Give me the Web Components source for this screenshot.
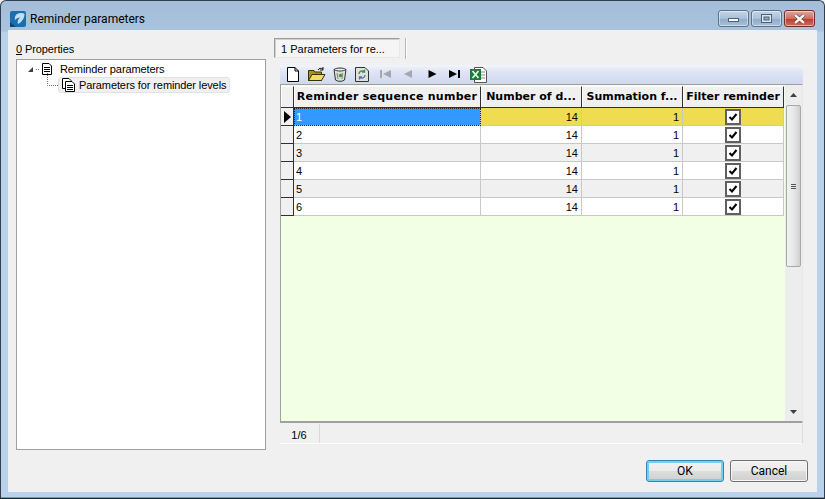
<!DOCTYPE html>
<html>
<head>
<meta charset="utf-8">
<title>Reminder parameters</title>
<style>
	html, body { margin: 0; padding: 0; background: #f0f0f0; overflow: hidden; }
	body { font-family: "Liberation Sans", sans-serif; font-size: 11px; color: #000; }
</style>
</head>
<body>
<dialog-window caption="Reminder parameters">
	<property-tree></property-tree>
	<tab-page>
		<grid-toolbar></grid-toolbar>
		<reminder-grid></reminder-grid>
		<record-status>1/6</record-status>
	</tab-page>
	<dialog-button slot="buttons" default>OK</dialog-button>
	<dialog-button slot="buttons">Cancel</dialog-button>
</dialog-window>

<script>
(()=> {
	class DialogWindow extends HTMLElement {
		constructor() {
			super();
			const shadowRoot = this.attachShadow({ mode: 'open' });
			const caption = this.getAttribute('caption');
			shadowRoot.innerHTML = `
				<style>
					:host {
						display: flex;
						flex-direction: column;
						box-sizing: border-box;
						width: 825px;
						height: 499px;
						border: 1px solid #2f3f4f;
						border-bottom-color: #10242f;
						border-radius: 6px 6px 0 0;
						background: linear-gradient(#a4bed9 0, #a9c3dd 30px, #b9d1ea 31px);
						box-shadow: inset 0 -1px 0 #3fb4d4;
						padding: 0 7px 6px;
					}
					.title {
						display: flex;
						align-items: center;
						box-sizing: border-box;
						height: 29px;
						padding-top: 6px;
						flex: none;
					}
					.logo { width: 16px; height: 16px; margin: 0 4px 0 2px; flex: none; }
					.text {
						flex: 1;
						font: 12px Roboto, "Liberation Sans", sans-serif;
						color: #000;
					}
					.caps { display: flex; margin-right: 2px; }
					.cap {
						display: flex;
						align-items: center;
						justify-content: center;
						box-sizing: border-box;
						width: 31px;
						height: 17px;
						margin-left: 2px;
						border: 1px solid #5d7288;
						border-radius: 3px;
						background: linear-gradient(#c4d6e8, #a9c0d8 50%, #8fabc7 51%, #a5c0da);
						box-shadow: inset 0 0 0 1px rgba(255,255,255,.45);
					}
					.cap.close {
						border-color: #6d2f2a;
						background: linear-gradient(#e0a89e, #cc6e60 50%, #b53c2e 51%, #cf6f5e);
					}
					.client {
						flex: 1;
						display: flex;
						flex-direction: column;
						background: #f0f0f0;
						min-height: 0;
					}
					.main {
						display: flex;
						box-sizing: content-box;
						height: 412px;
						padding: 8px 0 0 8px;
						flex: none;
					}
					.footer {
						display: flex;
						justify-content: flex-end;
						gap: 6px;
						padding: 10px 9px 0 0;
					}
				</style>
				<div class="title">
					<svg class="logo" viewBox="0 0 16 16">
						<rect width="16" height="16" rx="2" fill="#1c6fae"/>
						<path d="M0 11 L6 16 H0 Z" fill="#0c4478"/>
						<path d="M7 3 C10 1.500 13 2 14.500 3 C14.500 7 12 11 8 13 C7 10.500 8 8.500 10 6.500 C8 6.500 6.500 7.500 5 9 C4.500 7 5 4.500 7 3 Z" fill="#bfe0f5"/>
					</svg>
					<div class="text">${caption}</div>
					<div class="caps">
						<div class="cap"><svg width="11" height="7"><rect x="0.500" y="3.500" width="10" height="3" fill="#fff" stroke="#4d6074"/></svg></div>
						<div class="cap"><svg width="11" height="10"><rect x="0.500" y="0.500" width="10" height="8" fill="#dde7f1" stroke="#4d6074"/><rect x="3" y="3" width="5" height="3" fill="#8fabc7" stroke="#4d6074"/></svg></div>
						<div class="cap close"><svg width="13" height="10"><path d="M2 1 L11 9 M11 1 L2 9" stroke="#5b2a25" stroke-width="3.600"/><path d="M2 1 L11 9 M11 1 L2 9" stroke="#f7f2f0" stroke-width="2.400"/></svg></div>
					</div>
				</div>
				<div class="client">
					<div class="main"><slot></slot></div>
					<div class="footer"><slot name="buttons"></slot></div>
				</div>
			`;
		}
	}
	customElements.define('dialog-window', DialogWindow);

	class PropertyTree extends HTMLElement {
		constructor() {
			super();
			const shadowRoot = this.attachShadow({ mode: 'open' });
			shadowRoot.innerHTML = `
				<style>
					:host {
						display: flex;
						flex-direction: column;
						width: 250px;
						flex: none;
						letter-spacing: -.1px;
					}
					.label { height: 21px; line-height: 22px; box-sizing: border-box; }
					.box {
						flex: 1;
						box-sizing: border-box;
						background: #fff;
						border: 1px solid #a0a0a0;
						padding: 1px 0 0 11px;
					}
					.row { display: flex; align-items: center; height: 15px; }
					.row svg { flex: none; }
					.second { position: relative; height: 16px; margin-top: 1px; padding-left: 30px; }
					.pill {
						display: inline-flex;
						align-items: center;
						box-sizing: border-box;
						height: 16px;
						padding: 0 3px;
						background: #f0f0f0;
						border: 1px solid #e2e2e2;
						border-radius: 3px;
					}
					.lines { position: absolute; left: 19px; top: -4px; }
				</style>
				<div class="label"><u>0</u> Properties</div>
				<div class="box">
					<div class="row">
						<svg width="32" height="15" viewBox="0 0 32 15">
							<path d="M0 11 L5 6 V11 Z" fill="#404040"/>
							<path d="M8 8.500 H11" stroke="#808080" stroke-dasharray="1 1"/>
							<path d="M14.500 2.500 H21 L23.500 5 V13.500 H14.500 Z" fill="#fff" stroke="#000"/>
							<path d="M16 6.500 H22 M16 8.500 H22 M16 10.500 H22" stroke="#000"/>
						</svg>
						<span>Reminder parameters</span>
					</div>
					<div class="second">
						<svg class="lines" width="12" height="16"><path d="M0.500 0 V12.500 H12" fill="none" stroke="#707070" stroke-dasharray="1 1"/></svg>
						<span class="pill">
							<svg width="14" height="14" viewBox="0 0 14 14" style="margin-right:3px">
								<path d="M0.500 0.500 H7 L9 2.500 V10.500 H0.500 Z" fill="#fff" stroke="#000"/>
								<path d="M3.500 3.500 H10 L12.500 6 V13.500 H3.500 Z" fill="#fff" stroke="#000"/>
								<path d="M5 7.500 H11 M5 9.500 H11 M5 11.500 H11" stroke="#000"/>
							</svg>
							<span>Parameters for reminder levels</span>
						</span>
					</div>
				</div>
			`;
		}
	}
	customElements.define('property-tree', PropertyTree);

	class TabPage extends HTMLElement {
		constructor() {
			super();
			const shadowRoot = this.attachShadow({ mode: 'open' });
			shadowRoot.innerHTML = `
				<style>
					:host {
						display: flex;
						flex-direction: column;
						width: 529px;
						height: 406px;
						margin-left: 8px;
						flex: none;
					}
					.strip { display: flex; height: 27px; flex: none; }
					.tab {
						box-sizing: border-box;
						width: 126px;
						height: 20px;
						line-height: 20px;
						padding-left: 6px;
						background: #f5f5f5;
						border: 1px solid;
						border-color: #9c9c9c #e8e8e8 #e8e8e8 #9c9c9c;
						box-shadow: inset 1px 1px 0 #d0d0d0;
					}
					.sep {
						width: 1px;
						height: 21px;
						margin-left: 5px;
						background: #b4b4b4;
						box-shadow: 1px 0 0 #fff;
					}
					.page {
						flex: 1;
						display: flex;
						flex-direction: column;
						padding-left: 6px;
						min-height: 0;
					}
				</style>
				<div class="strip">
					<div class="tab">1 Parameters for re...</div>
					<div class="sep"></div>
				</div>
				<div class="page"><slot></slot></div>
			`;
		}
	}
	customElements.define('tab-page', TabPage);

	class GridToolbar extends HTMLElement {
		constructor() {
			super();
			const shadowRoot = this.attachShadow({ mode: 'open' });
			shadowRoot.innerHTML = `
				<style>
					:host {
						display: flex;
						align-items: flex-start;
						box-sizing: border-box;
						height: 19px;
						flex: none;
						padding: 2px 0 0 7px;
						background: linear-gradient(#f2f5fb, #dfe5f5 35%, #cfd8ee);
					}
					svg { flex: none; display: block; }
				</style>
				<svg width="13" height="15" viewBox="0 0 13 15" style="margin-right:8px">
					<path d="M0.500 0.500 H8 L11.500 4 V14.500 H0.500 Z" fill="#fff" stroke="#000"/>
					<path d="M8 0.500 V4 H11.500" fill="none" stroke="#000"/>
				</svg>
				<svg width="18" height="15" viewBox="0 0 18 15" style="margin-right:7px">
					<path d="M0.500 3.500 H6 L7 5 H13.500 V13.500 H0.500 Z" fill="#a89418" stroke="#3a3000"/>
					<path d="M0.500 13.500 L4 7.500 H17 L13.500 13.500 Z" fill="#eedd66" stroke="#3a3000"/>
					<path d="M10 3 C11 1 13 1 15 2 M15 0 V3 H12" fill="none" stroke="#111"/>
				</svg>
				<svg width="14" height="15" viewBox="0 0 14 15" style="margin-right:8px">
					<path d="M1 2.500 C4 0.500 10 0.500 13 2.500 L11.500 13 C9 14.800 5 14.800 2.500 13 Z" fill="#dcdcd8" stroke="#333"/>
					<path d="M1 2.500 C4 4.500 10 4.500 13 2.500" fill="#fff" stroke="#333"/>
					<path d="M4 6 L5 12 M9.500 6 L9 12" stroke="#888"/>
					<circle cx="7.500" cy="8.500" r="1.800" fill="#3f9a3f"/>
				</svg>
				<svg width="14" height="15" viewBox="0 0 14 15" style="margin-right:11px">
					<path d="M0.500 0.500 H10 L13.500 4 V14.500 H0.500 Z" fill="#dde2dd" stroke="#333"/>
					<path d="M4 7 C4 4 7 3 9.500 4.500 M9.500 2.500 V5 H7" fill="none" stroke="#4a8a4a" stroke-width="1.300"/>
					<path d="M10 8 C10 11 7 12 4.500 10.500 M4.500 12.500 V10 H7" fill="none" stroke="#5a6fa0" stroke-width="1.300"/>
				</svg>
				<svg width="11" height="15" viewBox="0 0 11 15" style="margin-right:12px"><path d="M0 3 H2 V11 H0 Z M11 3 V11 L3 7 Z" fill="#a4a8ae"/></svg>
				<svg width="10" height="15" viewBox="0 0 10 15" style="margin-right:15px"><path d="M9 3 V11 L1 7 Z" fill="#a4a8ae"/></svg>
				<svg width="9" height="15" viewBox="0 0 9 15" style="margin-right:12px"><path d="M0.500 3 V11 L8.500 7 Z" fill="#000"/></svg>
				<svg width="11" height="15" viewBox="0 0 11 15" style="margin-right:10px"><path d="M0 3 V11 L8 7 Z M9 3 H11 V11 H9 Z" fill="#000"/></svg>
				<svg width="17" height="16" viewBox="0 0 17 16">
					<path d="M4.500 0.500 H13 L16.500 4 V15.500 H4.500 Z" fill="#fff" stroke="#555"/>
					<path d="M10 5 H15 M10 8 H15 M10 11 H15" stroke="#888"/>
					<path d="M0 2 H11 V13 H0 Z" fill="#1f7a3a"/>
					<path d="M2.500 4 L8.500 11 M8.500 4 L2.500 11" stroke="#e4f3e4" stroke-width="1.800"/>
				</svg>
			`;
		}
	}
	customElements.define('grid-toolbar', GridToolbar);

	const rows = [1, 2, 3, 4, 5, 6];

	class ReminderGrid extends HTMLElement {
		constructor() {
			super();
			const shadowRoot = this.attachShadow({ mode: 'open' });
			const heads = ['Reminder sequence number', 'Number of d...', 'Summation f...', 'Filter reminder'];
			const check = `<svg width="16" height="16" viewBox="0 0 16 16"><rect x="1" y="1" width="14" height="14" fill="#fff" stroke="#606060" stroke-width="2"/><path d="M4.500 8 L7 10.500 L11.500 5" fill="none" stroke="#000" stroke-width="2"/></svg>`;
			const body = rows.map((n, i) => {
				const tone = i == 0 ? 'sel' : i % 2 == 0 ? 'alt' : '';
				return `
					<div class="ind">${i == 0 ? '<svg width="7" height="12"><path d="M0 0 L7 6 L0 12 Z" fill="#000"/></svg>' : ''}</div>
					<div class="cell ${i == 0 ? 'cur' : tone}">${n}</div>
					<div class="cell num ${tone}">14</div>
					<div class="cell num ${tone}">1</div>
					<div class="cell chk ${tone}">${check}</div>
				`;
			}).join('');
			shadowRoot.innerHTML = `
				<style>
					:host {
						display: flex;
						box-sizing: border-box;
						height: 339px;
						flex: none;
						border: 1px solid #a0a0a0;
						border-width: 1px 0 2px 1px;
						border-right: 1px solid #e8e8e8;
						background: #f2ffe4;
					}
					.table {
						flex: 1;
						align-self: flex-start;
						display: grid;
						grid-template-columns: 13px 187px 101px 101px 101px;
						grid-template-rows: 22px;
						grid-auto-rows: 18px;
						padding-top: 1px;
					}
					.head {
						box-sizing: border-box;
						line-height: 20px;
						font-family: "DejaVu Sans", sans-serif;
						font-weight: bold;
						font-size: 11px;
						white-space: nowrap;
						overflow: hidden;
						text-align: center;
						background: #f0f0f0;
						border-right: 1px solid #303030;
						border-bottom: 1px solid #303030;
						border-top: 1px solid #fff;
						box-shadow: inset 1px 0 0 #fff;
					}
					.wide { letter-spacing: .25px; }
					.ind {
						box-sizing: border-box;
						display: flex;
						align-items: center;
						justify-content: flex-end;
						padding-right: 2px;
						background: #f0f0f0;
						border-right: 1px solid #303030;
						border-bottom: 1px solid #303030;
					}
					.cell {
						box-sizing: border-box;
						background: #fff;
						border-right: 1px solid #c8c8c8;
						border-bottom: 1px solid #c8c8c8;
						line-height: 18px;
						padding: 0 3px 0 2px;
					}
					.num { text-align: right; }
					.chk { display: flex; align-items: center; justify-content: center; }
					.alt { background: #f0f0f0; }
					.sel { background: #f0dc50; }
					.cur {
						background: #3399ff;
						color: #fff;
						outline: 1px dotted #222;
						outline-offset: -1px;
					}
					.bar {
						width: 17px;
						flex: none;
						display: flex;
						flex-direction: column;
						box-sizing: border-box;
						background: #ededed;
						padding-top: 1px;
					}
					.btn { height: 18px; flex: none; display: flex; align-items: center; justify-content: center; }
					.thumb {
						box-sizing: border-box;
						height: 162px;
						flex: none;
						margin: 1px 1px 0;
						display: flex;
						align-items: center;
						justify-content: center;
						border: 1px solid #a8a8a8;
						border-radius: 2px;
						background: linear-gradient(90deg, #f2f2f2, #e8e8e8 50%, #d0d0d0);
					}
					.track { flex: 1; }
				</style>
				<div class="table">
					<div class="head"></div>
					${heads.map((h, i) => `<div class="head ${i == 0 ? 'wide' : ''}">${h}</div>`).join('')}
					${body}
				</div>
				<div class="bar">
					<div class="btn"><svg width="7" height="4"><path d="M0 4 L3.500 0 L7 4 Z" fill="#404040"/></svg></div>
					<div class="thumb"><svg width="5" height="7"><path d="M0 1.500 H5 M0 3.500 H5 M0 5.500 H5" stroke="#555"/></svg></div>
					<div class="track"></div>
					<div class="btn"><svg width="7" height="4"><path d="M0 0 L7 0 L3.500 4 Z" fill="#404040"/></svg></div>
				</div>
			`;
		}
	}
	customElements.define('reminder-grid', ReminderGrid);

	class RecordStatus extends HTMLElement {
		constructor() {
			super();
			const shadowRoot = this.attachShadow({ mode: 'open' });
			shadowRoot.innerHTML = `
				<style>
					:host {
						display: flex;
						box-sizing: border-box;
						height: 20px;
						margin-top: 1px;
						flex: none;
						border-bottom: 1px solid #fff;
						border-right: 1px solid #dcdcdc;
					}
					.cell {
						box-sizing: border-box;
						width: 40px;
						line-height: 22px;
						text-align: center;
						border-right: 1px solid #d8d8d8;
						padding-right: 1px;
					}
				</style>
				<div class="cell"><slot></slot></div>
			`;
		}
	}
	customElements.define('record-status', RecordStatus);

	class DialogButton extends HTMLElement {
		constructor() {
			super();
			const shadowRoot = this.attachShadow({ mode: 'open' });
			shadowRoot.innerHTML = `
				<style>
					:host {
						display: flex;
						align-items: center;
						justify-content: center;
						box-sizing: border-box;
						width: 78px;
						height: 22px;
						font: 12px Roboto, "Liberation Sans", sans-serif;
						border: 1px solid #707070;
						border-radius: 3px;
						background: linear-gradient(#f2f2f2, #ebebeb 50%, #dddddd 51%, #cfcfcf);
						box-shadow: inset 0 0 0 1px #f6f6f6;
					}
					:host([default]) {
						border-color: #3c7fb1;
						box-shadow: inset 0 0 0 2px #6fd0f2;
					}
				</style>
				<slot></slot>
			`;
		}
	}
	customElements.define('dialog-button', DialogButton);
})();
</script>
</body>
</html>
